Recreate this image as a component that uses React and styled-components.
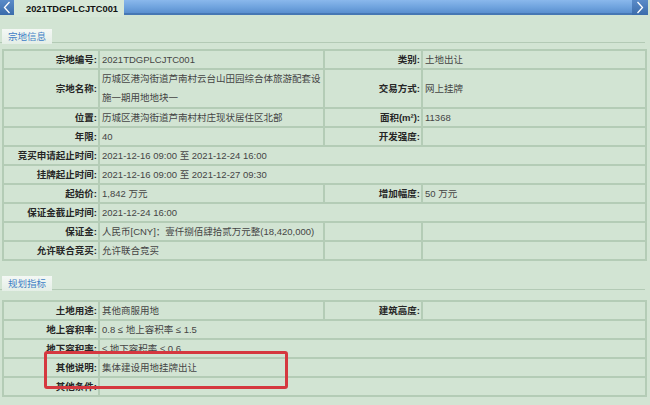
import React from 'react';
import styled, { createGlobalStyle } from 'styled-components';

const Global = createGlobalStyle`
  html, body { margin: 0; padding: 0; }
  body {
    background: #d2e4d3;
    font-family: "Liberation Sans", "Noto Sans CJK SC", sans-serif;
    width: 650px;
    height: 405px;
    overflow: hidden;
  }
`;

const Page = styled.div`
  width: 650px;
  height: 405px;
  background: #d2e4d3;
  position: relative;
`;

const TopBar = styled.div`
  display: flex;
  align-items: flex-start;
  height: 17px;
  padding-right: 2px;
`;

const ArrowBtn = styled.div`
  width: ${p => p.$w || 14}px;
  height: 15px;
  background: linear-gradient(#5a8bc8, #3b6cab);
  display: flex;
  align-items: center;
  justify-content: center;
  flex-shrink: 0;
`;

const Tab = styled.div`
  width: 110px;
  height: 17px;
  background: #d6e7d7;
  display: flex;
  align-items: center;
  padding-left: 12px;
  box-sizing: border-box;
  font-weight: bold;
  font-size: 9.3px;
  color: #111;
  flex-shrink: 0;
`;

const BlueBar = styled.div`
  flex: 1;
  height: 15px;
  box-sizing: border-box;
  background: linear-gradient(#8ab8ec 0%, #6fa3de 55%, #5a8fcf 100%);
  border-bottom: 2px solid #4677b4;
`;

const Section = styled.section`
  margin-top: ${p => p.$top}px;
  position: relative;
`;

const HeadRow = styled.div`
  margin-right: 5px;
  border-bottom: 1px solid #b3cab5;
  padding-left: 2px;
  height: 16px;
`;

const HeadBox = styled.div`
  display: inline-block;
  height: 15px;
  line-height: 15px;
  padding: 0 6px;
  background: linear-gradient(#f4f8f5, #e4eee6);
  color: #3f80c6;
  font-size: 9.5px;
`;

const Table = styled.table`
  margin: ${p => p.$gap}px 0 0 2px;
  width: 643px;
  border-collapse: collapse;
  table-layout: fixed;
  font-size: 9.5px;
`;

const Cell = styled.td`
  border: 2px solid #b4ccb6;
  padding: 0 ${p => (p.$label ? 1 : 2)}px 0 ${p => (p.$label ? 1 : 2)}px;
  line-height: ${p => (p.$tall ? 18.5 : 17)}px;
  height: ${p => (p.$tall ? 37 : 17)}px;
  text-align: ${p => (p.$label ? 'right' : 'left')};
  font-weight: ${p => (p.$label ? 'bold' : 'normal')};
  color: ${p => (p.$label ? '#262626' : '#454545')};
  white-space: nowrap;
  overflow: hidden;
  vertical-align: middle;
`;

const Mark = styled.div`
  position: absolute;
  left: 44px;
  top: 78px;
  width: 244px;
  height: 38px;
  box-sizing: border-box;
  border: 3px solid #d5383f;
  border-radius: 3px;
  pointer-events: none;
`;

const Chevron = ({ dir }) => (
  <svg width="8" height="13" viewBox="0 0 8 13">
    <polyline
      points={dir === 'left' ? '6.5,1 1.5,6.5 6.5,12' : '1.5,1 6.5,6.5 1.5,12'}
      fill="none"
      stroke="#fff"
      strokeWidth="1.3"
    />
  </svg>
);

const info = [
  { l1: '宗地编号:', v1: ['2021TDGPLCJTC001'], l2: '类别:', v2: '土地出让' },
  {
    l1: '宗地名称:',
    v1: ['历城区港沟街道芦南村云台山田园综合体旅游配套设', '施一期用地地块一'],
    l2: '交易方式:',
    v2: '网上挂牌',
    tall: true,
  },
  { l1: '位置:', v1: ['历城区港沟街道芦南村村庄现状居住区北部'], l2: '面积(m²):', v2: '11368' },
  { l1: '年限:', v1: ['40'], l2: '开发强度:', v2: '' },
  { l1: '竞买申请起止时间:', v1: ['2021-12-16 09:00 至 2021-12-24 16:00'], span: true },
  { l1: '挂牌起止时间:', v1: ['2021-12-16 09:00 至 2021-12-27 09:30'], span: true },
  { l1: '起始价:', v1: ['1,842 万元'], l2: '增加幅度:', v2: '50 万元' },
  { l1: '保证金截止时间:', v1: ['2021-12-24 16:00'], span: true },
  { l1: '保证金:', v1: ['人民币[CNY]：壹仟捌佰肆拾贰万元整(18,420,000)'], l2: '', v2: '' },
  { l1: '允许联合竞买:', v1: ['允许联合竞买'], l2: '', v2: '' },
];

const plan = [
  { l1: '土地用途:', v1: ['其他商服用地'], l2: '建筑高度:', v2: '' },
  { l1: '地上容积率:', v1: ['0.8 ≤ 地上容积率 ≤ 1.5'], span: true },
  { l1: '地下容积率:', v1: ['≤ 地下容积率 ≤ 0.6'], span: true },
  { l1: '其他说明:', v1: ['集体建设用地挂牌出让'], span: true },
  { l1: '其他条件:', v1: [''], span: true },
];

const InfoTable = ({ rows, gap }) => (
  <Table $gap={gap}>
    <colgroup>
      <col style={{ width: 96 }} />
      <col style={{ width: 225 }} />
      <col style={{ width: 98 }} />
      <col style={{ width: 224 }} />
    </colgroup>
    <tbody>
      {rows.map((r, i) => (
        <tr key={i}>
          <Cell $label>{r.l1}</Cell>
          <Cell colSpan={r.span ? 3 : 1} $tall={r.tall}>
            {r.v1.map((t, j) => (
              <React.Fragment key={j}>
                {j > 0 && <br />}
                {t}
              </React.Fragment>
            ))}
          </Cell>
          {!r.span && <Cell $label>{r.l2}</Cell>}
          {!r.span && <Cell>{r.v2}</Cell>}
        </tr>
      ))}
    </tbody>
  </Table>
);

export default function App() {
  return (
    <Page>
      <Global />
      <TopBar>
        <ArrowBtn $w={14}>
          <Chevron dir="left" />
        </ArrowBtn>
        <Tab>2021TDGPLCJTC001</Tab>
        <BlueBar />
        <ArrowBtn $w={16}>
          <Chevron dir="right" />
        </ArrowBtn>
      </TopBar>
      <Section $top={9}>
        <HeadRow>
          <HeadBox>宗地信息</HeadBox>
        </HeadRow>
        <InfoTable rows={info} gap={6} />
      </Section>
      <Section $top={12}>
        <HeadRow>
          <HeadBox>规划指标</HeadBox>
        </HeadRow>
        <InfoTable rows={plan} gap={10} />
        <Mark />
      </Section>
    </Page>
  );
}
